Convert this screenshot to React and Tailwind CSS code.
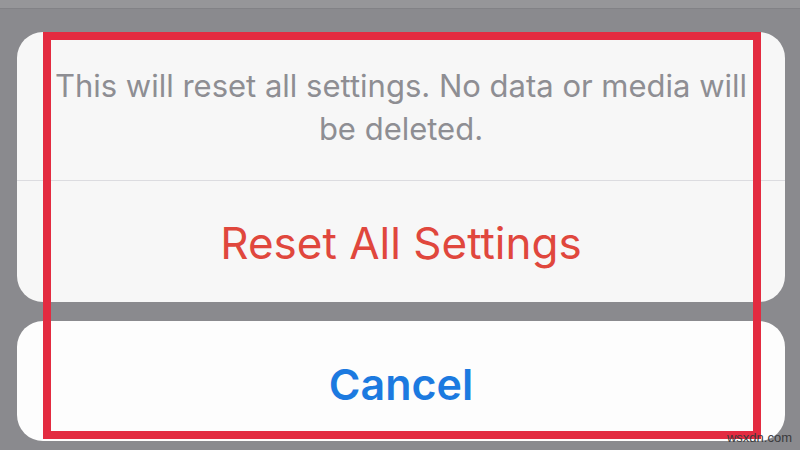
import React from 'react';

const ActionSheet = () => {
  return (
    <div className="relative w-[800px] h-[450px] overflow-hidden bg-[#8a8a8e] font-['Inter','Liberation_Sans',sans-serif]">
      <div className="h-[9px] bg-[#969699] border-b border-[#828286]" />

      <div className="mt-[23px] ml-[17px] mr-[15px] flex flex-col gap-[19px]">
        <div className="rounded-[26px] bg-[#f7f7f7] overflow-hidden">
          <p className="px-[22px] pt-[32px] pb-[30px] text-center text-[31px] leading-[43px] text-[#8e8e93]">
            This will reset all settings. No data or media will be deleted.
          </p>
          <div className="h-px bg-[#dcdce0]" />
          <button className="w-full h-[121px] pt-[3px] flex items-center justify-center text-[44px] text-[#e0473d]">
            Reset All Settings
          </button>
        </div>

        <div className="rounded-[26px] bg-[#fdfdfd]">
          <button className="w-full h-[120px] pt-[6px] flex items-center justify-center text-[43px] font-semibold text-[#1c7ae0]">
            Cancel
          </button>
        </div>
      </div>

      {/* highlight frame drawn over the sheet */}
      <div className="absolute left-[43px] top-[32px] w-[718px] h-[407px] border-[8px] border-[#e32b40] pointer-events-none" />

      <span className="absolute right-[8px] bottom-[3px] text-[13px] text-[#3a3a3c] font-['Liberation_Sans',sans-serif]">
        wsxdn.com
      </span>
    </div>
  );
};

export default function App() {
  return <ActionSheet />;
}
